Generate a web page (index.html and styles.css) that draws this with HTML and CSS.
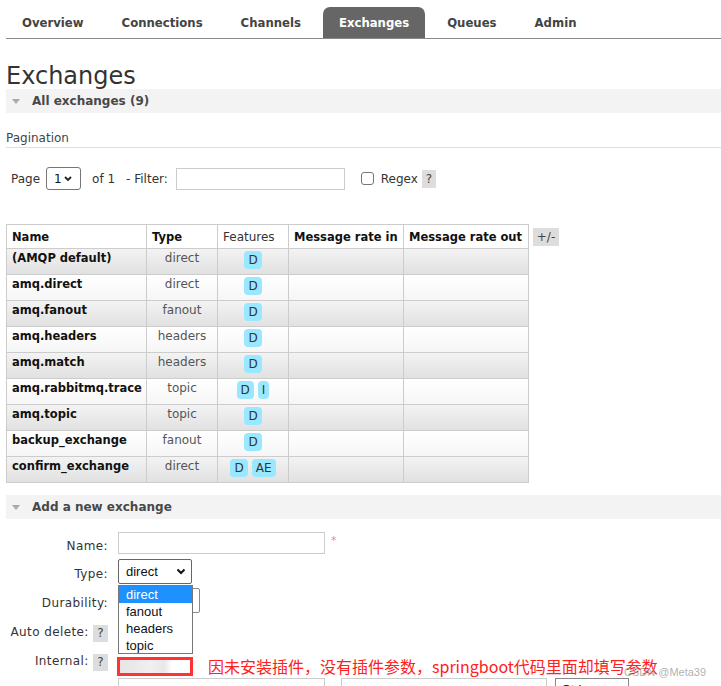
FILE: index.html
```html
<!DOCTYPE html>
<html lang="en">
<head>
<meta charset="utf-8">
<title>RabbitMQ Management - Exchanges</title>
<link rel="stylesheet" href="styles.css">
</head>
<body>
<div class="page">
  <ul class="tabs">
    <li class="tab">Overview</li>
    <li class="tab">Connections</li>
    <li class="tab">Channels</li>
    <li class="tab active">Exchanges</li>
    <li class="tab">Queues</li>
    <li class="tab">Admin</li>
  </ul>

  <h1 class="title">Exchanges</h1>
  <div class="section-head"><span class="tri"></span>All exchanges (9)</div>

  <div class="pagination-title">Pagination</div>
  <div class="pager">
    <span class="pg-label">Page</span>
    <span class="select page-sel"><span>1</span><svg class="chev" width="8" height="6" viewBox="0 0 8 6"><path d="M1 1 L4 4 L7 1" fill="none" stroke="#222" stroke-width="1.8"/></svg></span>
    <span class="of">of 1</span>
    <span class="filter-label">- Filter:</span>
    <input class="filter" type="text">
    <input class="check" type="checkbox">
    <span class="regex">Regex</span>
    <span class="help">?</span>
  </div>

  <div class="table-wrap">
    <table class="list">
      <thead>
        <tr>
          <th class="c-name">Name</th>
          <th class="c-type">Type</th>
          <th class="c-feat plain">Features</th>
          <th class="c-in">Message rate in</th>
          <th class="c-out">Message rate out</th>
        </tr>
      </thead>
      <tbody>
        <tr class="odd"><td class="name">(AMQP default)</td><td class="type">direct</td><td class="feat"><abbr class="badge">D</abbr></td><td></td><td></td></tr>
        <tr class="even"><td class="name">amq.direct</td><td class="type">direct</td><td class="feat"><abbr class="badge">D</abbr></td><td></td><td></td></tr>
        <tr class="odd"><td class="name">amq.fanout</td><td class="type">fanout</td><td class="feat"><abbr class="badge">D</abbr></td><td></td><td></td></tr>
        <tr class="even"><td class="name">amq.headers</td><td class="type">headers</td><td class="feat"><abbr class="badge">D</abbr></td><td></td><td></td></tr>
        <tr class="odd"><td class="name">amq.match</td><td class="type">headers</td><td class="feat"><abbr class="badge">D</abbr></td><td></td><td></td></tr>
        <tr class="even"><td class="name">amq.rabbitmq.trace</td><td class="type">topic</td><td class="feat"><abbr class="badge">D</abbr><abbr class="badge">I</abbr></td><td></td><td></td></tr>
        <tr class="odd"><td class="name">amq.topic</td><td class="type">topic</td><td class="feat"><abbr class="badge">D</abbr></td><td></td><td></td></tr>
        <tr class="even"><td class="name">backup_exchange</td><td class="type">fanout</td><td class="feat"><abbr class="badge">D</abbr></td><td></td><td></td></tr>
        <tr class="odd"><td class="name">confirm_exchange</td><td class="type">direct</td><td class="feat"><abbr class="badge">D</abbr><abbr class="badge">AE</abbr></td><td></td><td></td></tr>
      </tbody>
    </table>
    <span class="help plusminus">+/-</span>
  </div>

  <div class="section-head add-head"><span class="tri"></span>Add a new exchange</div>

  <div class="form">
    <div class="label">Name:</div>
    <div class="ctrl"><input class="text-in name-in" type="text"><span class="req">*</span></div>

    <div class="label">Type:</div>
    <div class="ctrl ctrl-type">
      <span class="select type-sel"><span>direct</span><svg class="chev" width="10" height="7" viewBox="0 0 10 7"><path d="M1.5 1.5 L5 5 L8.5 1.5" fill="none" stroke="#111" stroke-width="2"/></svg></span>
      <ul class="dropdown">
        <li class="opt selected">direct</li>
        <li class="opt">fanout</li>
        <li class="opt">headers</li>
        <li class="opt">topic</li>
      </ul>
    </div>

    <div class="label">Durability:</div>
    <div class="ctrl"><span class="select dur-sel"><svg class="chev" width="10" height="7" viewBox="0 0 10 7"><path d="M1.5 1.5 L5 5 L8.5 1.5" fill="none" stroke="#111" stroke-width="2"/></svg></span></div>

    <div class="label">Auto delete: <span class="help">?</span></div>
    <div class="ctrl"></div>

    <div class="label">Internal: <span class="help">?</span></div>
    <div class="ctrl ctrl-internal">
      <span class="marked"><span class="blur"></span></span>
      <span class="note">因未安装插件，没有插件参数，springboot代码里面却填写参数</span>
    </div>

    <div class="label"></div>
    <div class="ctrl ctrl-args">
      <span class="arg-box arg-key"></span>
      <span class="arg-box arg-val"></span>
      <span class="arg-box arg-type">String</span>
    </div>
  </div>

  <div class="watermark">CSDN @Meta39</div>
</div>
</body>
</html>
```

FILE: styles.css
```css
* { box-sizing: border-box; }

html, body {
  margin: 0;
  padding: 0;
  background: #fff;
}

body {
  font-family: "DejaVu Sans", Verdana, sans-serif;
  font-size: 12px;
  color: #444;
}

.page {
  position: relative;
  height: 686px;
  overflow: hidden;
  padding-left: 6px;
}

/* tabs */
.tabs {
  display: flex;
  list-style: none;
  margin: 0;
  padding: 7px 0 0 0;
  border-bottom: 1px solid #888;
}

.tab {
  height: 31px;
  padding: 2px 16px 0;
  line-height: 29px;
  margin-right: 6px;
  font-size: 11.7px;
  font-weight: bold;
  color: #444;
  border-radius: 7px 7px 0 0;
}

.tab.active {
  background: #666;
  color: #fff;
}

/* title & sections */
.title {
  margin: 24px 0 0;
  font-size: 24px;
  line-height: 26px;
  font-weight: normal;
  color: #333;
}

.section-head {
  display: flex;
  align-items: center;
  height: 24px;
  background: #f3f3f3;
  font-weight: bold;
  color: #484848;
}

.tri {
  width: 0;
  height: 0;
  border-left: 4px solid transparent;
  border-right: 4px solid transparent;
  border-top: 5px solid #aaa;
  margin: 0 12px 0 6px;
}

.pagination-title {
  margin-top: 17px;
  line-height: 16px;
  padding-bottom: 1px;
  border-bottom: 1px solid #ddd;
  color: #444;
}

/* pager */
.pager {
  display: flex;
  align-items: center;
  height: 23px;
  margin-top: 19px;
  color: #333;
}

.pg-label { margin-left: 5px; }

.select {
  display: inline-flex;
  align-items: center;
  justify-content: space-between;
  border: 1px solid #767676;
  border-radius: 3px;
  background: #fff;
  color: #111;
}

.page-sel {
  width: 35px;
  height: 23px;
  margin-left: 6px;
  padding: 0 8px 0 7px;
}

.of { margin-left: 11px; }
.filter-label { margin-left: 11px; }

.filter {
  width: 169px;
  height: 22px;
  margin: 0 0 0 8px;
  border: 1px solid #ccc;
  padding: 0;
}

.check {
  appearance: none;
  -webkit-appearance: none;
  width: 13px;
  height: 13px;
  margin: 0 0 0 16px;
  border: 1px solid #767676;
  border-radius: 3px;
  background: #fff;
}

.regex { margin-left: 7px; }

.help {
  display: inline-block;
  width: 15px;
  height: 17px;
  line-height: 17px;
  text-align: center;
  background: #ddd;
  color: #444;
  letter-spacing: 0;
}

.pager .help { margin-left: 4px; height: 18px; line-height: 18px; width: 14px; }

/* table */
.table-wrap {
  display: flex;
  align-items: flex-start;
  margin-top: 34px;
}

.list {
  border-collapse: separate;
  border-spacing: 0;
  table-layout: fixed;
  width: 523px;
  border-top: 1px solid #ccc;
  border-left: 1px solid #ccc;
  font-size: 11.5px;
}

.list th,
.list td {
  border-right: 1px solid #ccc;
  border-bottom: 1px solid #ccc;
  padding: 0 5px;
  white-space: nowrap;
  overflow: hidden;
}

.list th {
  height: 24px;
  text-align: left;
  font-weight: bold;
  color: #111;
  background: #fff;
  vertical-align: middle;
}

.list th.plain { font-weight: normal; color: #333; font-size: 12px; }

.c-name { width: 140px; }
.c-type { width: 71px; }
.c-feat { width: 71px; }
.c-in { width: 115px; }
.c-out { width: 125px; }

.list td {
  height: 26px;
  padding-top: 2px;
  line-height: 14px;
  vertical-align: top;
}

.list tr.odd td { background: linear-gradient(#f3f3f3, #e1e1e1); }
.list tr.even td { background: linear-gradient(#ffffff, #f6f6f6); }

.list td.name { font-weight: bold; color: #111; }
.list td.type { text-align: center; color: #555; font-size: 12px; }
.list td.feat { text-align: center; font-size: 12px; }

.badge {
  display: inline-block;
  vertical-align: top;
  padding: 2px 4px;
  margin: 0 2px;
  line-height: 14px;
  border-radius: 4px;
  background: #99e8ff;
  color: #333;
  text-decoration: none;
}

.plusminus {
  width: 26px;
  height: 18px;
  line-height: 18px;
  margin: 4px 0 0 4px;
}

.add-head { margin-top: 12px; }

/* form */
.form {
  display: grid;
  grid-template-columns: 102px 1fr;
  grid-template-rows: 27px 29px 29px 29px 29px 20px;
  column-gap: 10px;
  margin-top: 13px;
}

.label {
  text-align: right;
  padding-top: 8px;
  line-height: 14px;
  letter-spacing: 0.4px;
  color: #333;
  white-space: nowrap;
}

.form .label:first-child { padding-top: 7px; }

.label .help { vertical-align: top; margin-left: 0; }

.ctrl {
  display: flex;
  align-items: flex-start;
}

.text-in {
  height: 22px;
  border: 1px solid #ccc;
  margin: 0;
  padding: 0;
}

.name-in { width: 207px; }

.req {
  margin-left: 6px;
  margin-top: 2px;
  color: #f08a8a;
  font-size: 11px;
}

.ctrl-type { position: relative; }

.type-sel,
.dur-sel {
  height: 25px;
  padding: 0 5px 0 7px;
  border-radius: 2px;
  font-family: "Liberation Sans", Arial, sans-serif;
  font-size: 13px;
  border-color: #666;
}

.type-sel { width: 74px; }
.dur-sel { width: 82px; border-color: #888; justify-content: flex-end; }

.dropdown {
  position: absolute;
  top: 26px;
  left: 0;
  z-index: 2;
  width: 75px;
  height: 69px;
  margin: 0;
  padding: 0;
  list-style: none;
  background: #fff;
  border: 1px solid #767676;
  font-family: "Liberation Sans", Arial, sans-serif;
  font-size: 13px;
  color: #111;
}

.opt {
  height: 17px;
  line-height: 17px;
  padding-left: 7px;
}

.opt.selected {
  background: #1e90ff;
  color: #fff;
}

.ctrl-internal {
  align-items: center;
  padding-top: 11px;
}

.marked {
  display: block;
  width: 76px;
  height: 19px;
  margin-left: -1px;
  border: 3px solid #f33;
  background: #fff;
  overflow: hidden;
}

.blur {
  display: block;
  width: 52px;
  height: 100%;
  background: linear-gradient(90deg, #e6e6e6 0, #eaeaea 30%, #f0f0f0 60%, #e8e8e8 85%, #fff 100%);
}

.note {
  margin-left: 15px;
  font-family: "Noto Sans CJK SC", "Noto Sans", sans-serif;
  font-size: 16px;
  line-height: 20px;
  color: #ff2020;
  white-space: nowrap;
}

.ctrl-args {
  padding-top: 3px;
}

.arg-box {
  display: block;
  height: 22px;
  border: 1px solid #ccc;
  flex: none;
}

.arg-key { width: 207px; }
.arg-val { width: 206px; margin-left: 16px; }
.arg-type {
  width: 74px;
  margin-left: 8px;
  border-color: #888;
  padding: 3px 0 0 6px;
  font-family: "Liberation Sans", Arial, sans-serif;
  font-size: 13px;
  line-height: 15px;
  color: #111;
}

.watermark {
  position: absolute;
  left: 624px;
  top: 666px;
  font-family: "Liberation Sans", Arial, sans-serif;
  font-size: 11px;
  line-height: 13px;
  color: rgba(150, 150, 150, 0.75);
  white-space: nowrap;
}
```
